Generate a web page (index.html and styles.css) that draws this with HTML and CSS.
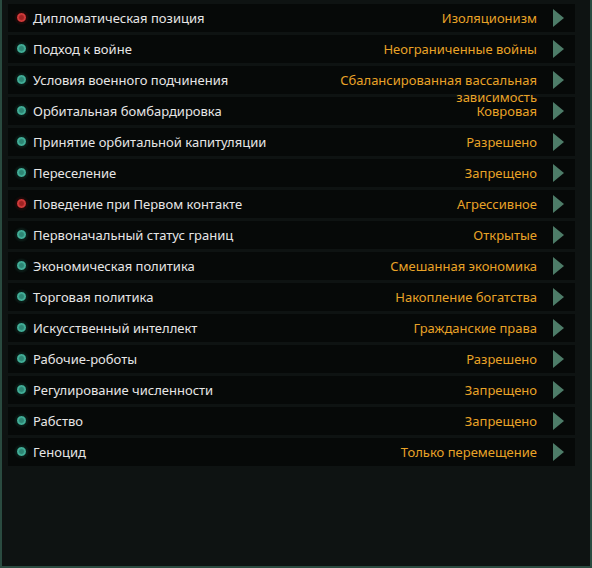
FILE: index.html
```html
<!DOCTYPE html>
<html lang="ru">
<head>
<meta charset="utf-8">
<link rel="stylesheet" href="styles.css">
</head>
<body>
<div class="panel">
  <div class="row"><span class="dot red"></span><span class="label">Дипломатическая позиция</span><span class="value">Изоляционизм</span><span class="arrow"></span></div>
  <div class="row"><span class="dot"></span><span class="label">Подход к войне</span><span class="value">Неограниченные войны</span><span class="arrow"></span></div>
  <div class="row"><span class="dot"></span><span class="label">Условия военного подчинения</span><span class="value">Сбалансированная вассальная зависимость</span><span class="arrow"></span></div>
  <div class="row"><span class="dot"></span><span class="label">Орбитальная бомбардировка</span><span class="value">Ковровая</span><span class="arrow"></span></div>
  <div class="row"><span class="dot"></span><span class="label">Принятие орбитальной капитуляции</span><span class="value">Разрешено</span><span class="arrow"></span></div>
  <div class="row"><span class="dot"></span><span class="label">Переселение</span><span class="value">Запрещено</span><span class="arrow"></span></div>
  <div class="row"><span class="dot red"></span><span class="label">Поведение при Первом контакте</span><span class="value">Агрессивное</span><span class="arrow"></span></div>
  <div class="row"><span class="dot"></span><span class="label">Первоначальный статус границ</span><span class="value">Открытые</span><span class="arrow"></span></div>
  <div class="row"><span class="dot"></span><span class="label">Экономическая политика</span><span class="value">Смешанная экономика</span><span class="arrow"></span></div>
  <div class="row"><span class="dot"></span><span class="label">Торговая политика</span><span class="value">Накопление богатства</span><span class="arrow"></span></div>
  <div class="row"><span class="dot"></span><span class="label">Искусственный интеллект</span><span class="value">Гражданские права</span><span class="arrow"></span></div>
  <div class="row"><span class="dot"></span><span class="label">Рабочие-роботы</span><span class="value">Разрешено</span><span class="arrow"></span></div>
  <div class="row"><span class="dot"></span><span class="label">Регулирование численности</span><span class="value">Запрещено</span><span class="arrow"></span></div>
  <div class="row"><span class="dot"></span><span class="label">Рабство</span><span class="value">Запрещено</span><span class="arrow"></span></div>
  <div class="row"><span class="dot"></span><span class="label">Геноцид</span><span class="value">Только перемещение</span><span class="arrow"></span></div>
</div>
</body>
</html>
```

FILE: styles.css
```css
html, body {
  margin: 0;
  padding: 0;
  background: #0e1412;
}
body {
  width: 592px;
  height: 568px;
  overflow: hidden;
  font-family: "Noto Sans", "Open Sans", sans-serif;
  font-size: 13px;
}
.panel {
  box-sizing: border-box;
  width: 592px;
  height: 568px;
  background: #0e1312;
  border-left: 2px solid #2a4b40;
  border-right: 2px solid #2a4b40;
  border-bottom: 2px solid #2a4b40;
  padding: 4px 15px 0 6px;
  display: flex;
  flex-direction: column;
  gap: 3px;
}
.row {
  height: 28px;
  background: #060908;
  display: flex;
  align-items: flex-start;
  position: relative;
}
.dot {
  flex: none;
  width: 11px;
  height: 11px;
  margin: 8px 0 0 8px;
  border-radius: 50%;
  box-sizing: border-box;
  border: 1px solid #0b221c;
  background: radial-gradient(circle at 50% 50%, #2d8674 0 30%, #46b59e 55%, #2e8a76 80%, #15443a 100%);
  box-shadow: 0 0 3px rgba(70, 180, 150, 0.3);
}
.dot.red {
  border-color: #2a0808;
  background: radial-gradient(circle at 50% 50%, #a02222 0 30%, #d84040 55%, #a82626 80%, #4a0c0c 100%);
  box-shadow: 0 0 3px rgba(200, 50, 50, 0.3);
}
.label {
  flex: 1;
  color: #e6e6e6;
  line-height: 17px;
  padding: 6px 0 0 6px;
  white-space: nowrap;
}
.value {
  flex: none;
  max-width: 200px;
  color: #e9a327;
  text-align: right;
  line-height: 17px;
  padding-top: 6px;
  position: relative;
  z-index: 1;
}
.arrow {
  flex: none;
  width: 0;
  height: 0;
  margin: 5px 11px 0 16px;
  border-top: 9.5px solid transparent;
  border-bottom: 9.5px solid transparent;
  border-left: 11px solid #4d7c68;
}
```
